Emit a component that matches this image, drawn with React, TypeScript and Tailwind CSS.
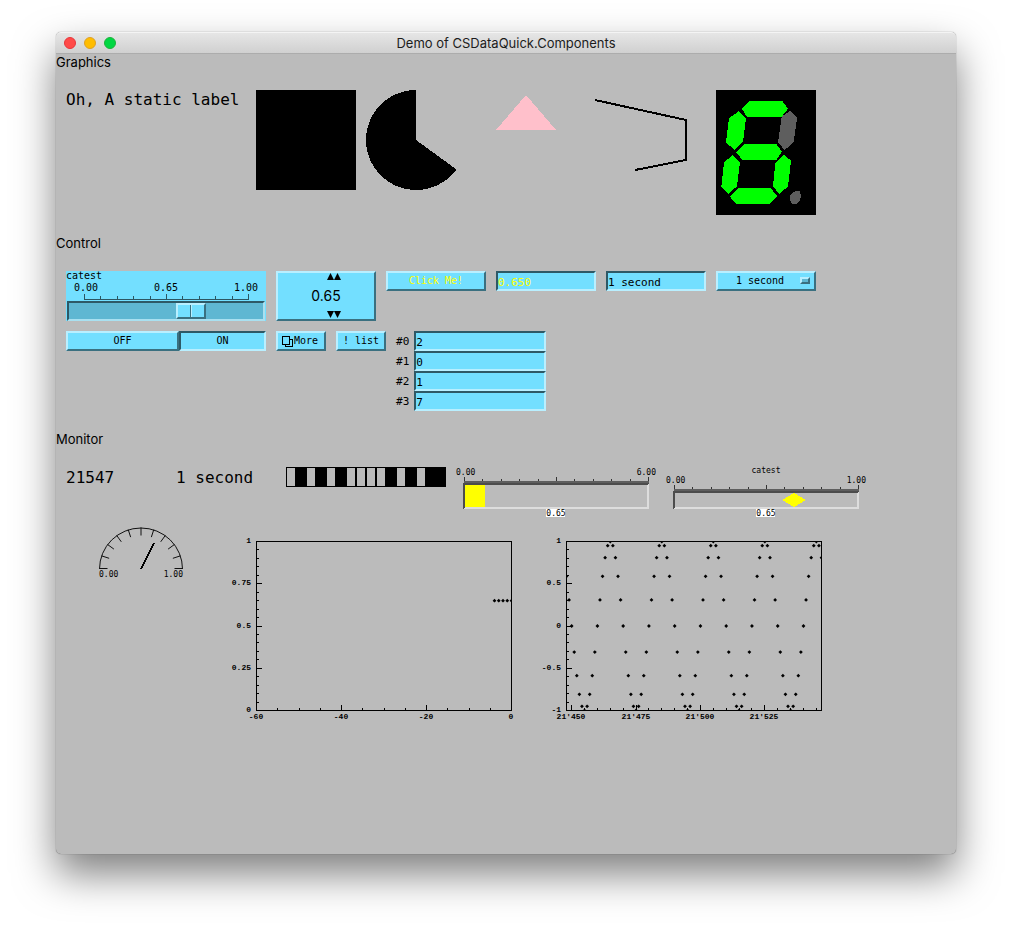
import { useState, type ReactNode } from 'react'

const MONO = 'font-["DejaVu_Sans_Mono",monospace]'
const RAISED =
  'border-2 border-t-[#b9efff] border-l-[#b9efff] border-b-[#3a7080] border-r-[#3a7080] bg-[#73dfff]'
const SUNKEN =
  'border-2 border-t-[#2e5966] border-l-[#2e5966] border-b-[#b9efff] border-r-[#b9efff] bg-[#73dfff]'

function Section({ title, children }: { title: string; children: ReactNode }) {
  return (
    <section>
      <h2 className="text-[13px] leading-4">{title}</h2>
      <div className="flex flex-col gap-2.5 px-2.5 py-5">{children}</div>
    </section>
  )
}

function TitleBar() {
  return (
    <header className="relative flex h-[22px] items-center justify-center rounded-t-[5px] border-t border-b border-t-[#f4f4f4] border-b-[#acacac] bg-linear-to-b from-[#e6e6e6] to-[#d0d0d0]">
      <div className="absolute left-2 flex gap-2">
        <button aria-label="Close" className="size-3 rounded-full border border-[#e8353a] bg-[#ff4a48]" />
        <button aria-label="Minimize" className="size-3 rounded-full border border-[#dfa023] bg-[#ffbd00]" />
        <button aria-label="Zoom" className="size-3 rounded-full border border-[#1db23a] bg-[#00d742]" />
      </div>
      <h1 className="text-[13px] leading-4 text-[#1c1c1c]">Demo of CSDataQuick.Components</h1>
    </header>
  )
}

const SEGMENTS: { points: string; on: boolean }[] = [
  { points: '148,63 247,63 264,86 245,110 140,110 126,87', on: true },
  { points: '117,93 138,115 129,185 103,210 78,187 87,115', on: true },
  { points: '270,93 291,114 281,187 254,210 234,187 245,110', on: false },
  { points: '134,192 229,192 246,215 229,240 127,240 109,217', on: true },
  { points: '99,225 120,247 111,319 84,342 64,320 72,247', on: true },
  { points: '252,225 273,242 264,320 238,341 219,320 226,249', on: true },
  { points: '117,324 212,324 231,348 207,372 108,372 89,349', on: true },
  { points: '280,335 299,333 303,345 300,363 288,372 275,371 269,358 270,346', on: false },
]

function SevenSegment() {
  return (
    <svg className="h-[125px] w-[100px] bg-black" viewBox="48 30 300 375" shapeRendering="crispEdges">
      {SEGMENTS.map((s) => (
        <polygon key={s.points} points={s.points} fill={s.on ? '#00ff00' : '#5e5e5e'} />
      ))}
    </svg>
  )
}

function Graphics() {
  return (
    <div className="flex flex-wrap items-start gap-2.5">
      <p className={`w-[180px] text-base leading-5 ${MONO}`}>Oh, A static label</p>
      <div className="size-[100px] bg-black" />
      <svg className="size-[100px]" viewBox="0 0 100 100" shapeRendering="crispEdges">
        <path d="M50 50 L50 0 A50 50 0 1 0 90.45 79.4 Z" />
      </svg>
      <svg className="size-[100px]" viewBox="0 0 100 100" shapeRendering="crispEdges">
        <polygon points="50,5 80,40 20,40" fill="#ffc0cb" />
      </svg>
      <svg className="h-[100px] w-[120px]" viewBox="0 0 120 100" shapeRendering="crispEdges">
        <polyline points="9,10 100,30 100,70 49,80" fill="none" stroke="black" strokeWidth="2" />
      </svg>
      <SevenSegment />
    </div>
  )
}

function Ticks({ x, y, width, color }: { x: number; y: number; width: number; color: string }) {
  return (
    <g fill={color} shapeRendering="crispEdges">
      {Array.from({ length: 11 }, (_, i) => {
        const h = i % 5 === 0 ? 6 : 4
        return <rect key={i} x={Math.round(x + (width * i) / 10)} y={y - h} width="1" height={h} />
      })}
    </g>
  )
}

function SliderControl() {
  const [value, setValue] = useState(0.65)
  return (
    <div className={`flex h-[50px] w-[200px] flex-col bg-[#73dfff] text-[10px] ${MONO}`}>
      <label htmlFor="catest" className="leading-[9px]">catest</label>
      <div className="flex justify-between px-2 pt-[2px] leading-[12px]">
        <span>0.00</span>
        <output htmlFor="catest">{value.toFixed(2)}</output>
        <span>1.00</span>
      </div>
      <svg className="h-[7px] w-full" viewBox="0 0 200 7">
        <Ticks x={18} y={6} width={164} color="#2c5663" />
        <rect x="18" y="5" width="165" height="1" fill="#2c5663" shapeRendering="crispEdges" />
      </svg>
      <input
        id="catest"
        type="range"
        min={0}
        max={1}
        step={0.01}
        value={value}
        onChange={(e) => setValue(Number(e.target.value))}
        className="mx-px h-5 appearance-none border-2 border-t-[#2e5966] border-l-[#2e5966] border-b-[#a9e0f0] border-r-[#a9e0f0] bg-[#5fb7d2] [&::-webkit-slider-thumb]:h-4 [&::-webkit-slider-thumb]:w-[30px] [&::-webkit-slider-thumb]:appearance-none [&::-webkit-slider-thumb]:border-2 [&::-webkit-slider-thumb]:border-t-[#b9efff] [&::-webkit-slider-thumb]:border-l-[#b9efff] [&::-webkit-slider-thumb]:border-b-[#3a7080] [&::-webkit-slider-thumb]:border-r-[#3a7080] [&::-webkit-slider-thumb]:bg-[linear-gradient(90deg,#73dfff_12px,#3a7080_12px,#3a7080_13px,#b9efff_13px,#b9efff_14px,#73dfff_14px)]"
      />
    </div>
  )
}

function ArrowButton({ down = false, label, onClick }: { down?: boolean; label: string; onClick: () => void }) {
  return (
    <button aria-label={label} onClick={onClick} className="size-[7px]">
      <svg className="size-[7px]" viewBox="0 0 7 7">
        <polygon points={down ? '0,0 7,0 3.5,7' : '0,7 7,7 3.5,0'} />
      </svg>
    </button>
  )
}

function WheelSwitch() {
  const [value, setValue] = useState(0.65)
  const step = (d: number) => () => setValue((v) => v + d)
  return (
    <div className={`flex h-[50px] w-[100px] flex-col items-center justify-between pb-px ${RAISED}`}>
      <div className="flex pl-4">
        <ArrowButton label="Increase tenths" onClick={step(0.1)} />
        <ArrowButton label="Increase hundredths" onClick={step(0.01)} />
      </div>
      <output className="text-sm leading-5">{value.toFixed(2)}</output>
      <div className="flex pl-4">
        <ArrowButton down label="Decrease tenths" onClick={step(-0.1)} />
        <ArrowButton down label="Decrease hundredths" onClick={step(-0.01)} />
      </div>
    </div>
  )
}

function TextEntry({ id, label, value, className }: { id: string; label?: string; value: string; className: string }) {
  return (
    <input
      id={id}
      aria-label={label}
      defaultValue={value}
      className={`h-5 pt-[2px] text-[11px] leading-[14px] ${SUNKEN} ${MONO} ${className}`}
    />
  )
}

function Control() {
  const [on, setOn] = useState(true)
  return (
    <>
      <div className="flex flex-wrap items-start gap-2.5 text-[10px]">
        <SliderControl />
        <WheelSwitch />
        <button className={`h-5 w-[100px] leading-4 text-[#ffff00] ${RAISED} ${MONO}`}>Click Me!</button>
        <TextEntry id="value-entry" label="Value" value="0.650" className="w-[100px] text-[#ffff00]" />
        <TextEntry id="rate-entry" label="Scan rate" value="1 second" className="w-[100px]" />
        <div className="relative w-[100px]">
          <select
            aria-label="Scan rate menu"
            defaultValue="1 second"
            className={`block h-5 w-full appearance-none pr-3 text-center leading-4 ${RAISED} ${MONO}`}
          >
            <option>1 second</option>
            <option>2 second</option>
            <option>5 second</option>
          </select>
          <span className="pointer-events-none absolute top-1.5 right-1.5 h-[7px] w-[10px] border-2 border-t-[#b9efff] border-l-[#b9efff] border-r-[#3a7080] border-b-[#3a7080] bg-[#5fb7d2]" />
        </div>
      </div>
      <div className={`flex flex-wrap items-start gap-2.5 text-[10px] leading-4 ${MONO}`}>
        <div className="flex w-[200px]">
          <button
            aria-pressed={!on}
            onClick={() => setOn(false)}
            className={`h-5 w-[113px] ${on ? RAISED : SUNKEN}`}
          >
            OFF
          </button>
          <button aria-pressed={on} onClick={() => setOn(true)} className={`h-5 grow ${on ? SUNKEN : RAISED}`}>
            ON
          </button>
        </div>
        <button className={`flex h-5 w-[50px] items-center pl-1 ${RAISED}`}>
          <svg className="size-3" viewBox="0 0 12 12" fill="none" stroke="black" shapeRendering="crispEdges">
            <path d="M0.5 1.5 h7 v8 h-7 z M8 4.5 h2.5 v7 h-7 v-2" />
          </svg>
          More
        </button>
        <button className={`h-5 w-[50px] ${RAISED}`}>! list</button>
        <div className="flex flex-col">
          {['2', '0', '1', '7'].map((v, i) => (
            <div key={i} className="flex items-center gap-[5px]">
              <label htmlFor={`entry-${i}`} className="pt-[2px] text-[11px]">#{i}</label>
              <TextEntry id={`entry-${i}`} value={v} className="w-[132px]" />
            </div>
          ))}
        </div>
      </div>
    </>
  )
}

function ByteView({ value }: { value: number }) {
  return (
    <svg className="h-5 w-[160px] bg-black" viewBox="0 0 160 20" shapeRendering="crispEdges">
      {Array.from({ length: 16 }, (_, i) =>
        (value >> (15 - i)) & 1 ? null : <rect key={i} x={i * 10 + 1} y="1" width="8" height="18" fill="#bbbbbb" />,
      )}
    </svg>
  )
}

function Trough({ top }: { top: number }) {
  return (
    <g shapeRendering="crispEdges">
      <rect x="8" y={top} width="185" height="2" fill="#5e5e5e" />
      <polygon points={`193,${top + 2} 193,42 7,42 9,40 191,40 191,${top + 4}`} fill="#dddddd" />
      <polygon points={`7,42 7,${top + 2} 193,${top + 2} 191,${top + 4} 9,${top + 4} 9,40`} fill="#4c4c4c" />
    </g>
  )
}

function ReadBack({ children }: { children: string }) {
  return (
    <>
      <rect x="90" y="42" width="19" height="8" fill="white" />
      <text x="100" y="49" textAnchor="middle">{children}</text>
    </>
  )
}

function BarMeter() {
  return (
    <svg className={`h-[50px] w-[200px] text-[8px] ${MONO}`} viewBox="0 0 200 50">
      <text x="0" y="8">0.00</text>
      <text x="200" y="8" textAnchor="end">6.00</text>
      <Ticks x={8} y={16} width={184} color="#333333" />
      <Trough top={14} />
      <rect x="9" y="18" width="20" height="22" fill="#ffff00" />
      <ReadBack>0.65</ReadBack>
    </svg>
  )
}

function Indicator() {
  return (
    <svg className={`h-[50px] w-[200px] overflow-visible text-[8px] ${MONO}`} viewBox="0 0 200 50">
      <text x="100" y="6" textAnchor="middle">catest</text>
      <text x="0" y="16">0.00</text>
      <text x="200" y="16" textAnchor="end">1.00</text>
      <Ticks x={8} y={24} width={184} color="#333333" />
      <Trough top={22} />
      <polygon points="116,33 128,26 140,33 128,40" fill="#ffff00" shapeRendering="crispEdges" />
      <ReadBack>0.65</ReadBack>
    </svg>
  )
}

function Gauge() {
  return (
    <svg className={`h-[52px] w-[150px] text-[8px] ${MONO}`} viewBox="0 0 150 52">
      <g fill="none" stroke="#111111">
        <path d="M33.5 42 A41.5 41 0 0 1 116.5 42" />
        {Array.from({ length: 11 }, (_, i) => {
          const a = Math.PI * (1 - i / 10)
          const c = Math.cos(a)
          const s = Math.sin(a)
          return <path key={i} d={`M${75 + 41.5 * c} ${41.5 - 41 * s} L${75 + 33.5 * c} ${41.5 - 33 * s}`} />
        })}
      </g>
      <path d="M75 42 L88 16" stroke="black" strokeWidth="2" shapeRendering="crispEdges" />
      <text x="33" y="50">0.00</text>
      <text x="117" y="50" textAnchor="end">1.00</text>
    </svg>
  )
}

type Tick = { at: number; label?: string }
type Point = [number, number]

const LEFT = 30
const TOP = 14
const W = 255
const H = 169

function Plot({ id, xTicks, yTicks, points }: { id: string; xTicks: Tick[]; yTicks: Tick[]; points: Point[] }) {
  const px = (f: number) => Math.round(LEFT + W * f)
  const py = (f: number) => Math.round(TOP + H * (1 - f))
  return (
    <svg
      className='h-[200px] w-[300px] font-["Liberation_Mono",monospace] text-[8px] font-bold'
      viewBox="0 0 300 200"
    >
      <clipPath id={id}>
        <rect x={LEFT} y={TOP} width={W + 1} height={H + 1} />
      </clipPath>
      <g shapeRendering="crispEdges">
        <rect x={LEFT + 0.5} y={TOP + 0.5} width={W} height={H} fill="none" stroke="black" />
        {xTicks.map((t) => {
          const h = t.label ? 5 : 2
          return <rect key={t.at} x={px(t.at)} y={TOP + H - h} width="1" height={h} />
        })}
        {yTicks.map((t) => (
          <rect key={t.at} x={LEFT + 1} y={py(t.at)} width={t.label ? 5 : 2} height="1" />
        ))}
      </g>
      {xTicks.map((t) => (
        <text key={t.at} x={px(t.at)} y="192" textAnchor="middle">{t.label}</text>
      ))}
      {yTicks.map((t) => (
        <text key={t.at} x="25" y={py(t.at) + 2} textAnchor="end">{t.label}</text>
      ))}
      <g clipPath={`url(#${id})`}>
        {points.map(([x, y]) => (
          <path
            key={x}
            d="M-1.9 0 L0 -1.9 L1.9 0 L0 1.9 Z"
            transform={`translate(${LEFT + 0.5 + W * x} ${TOP + 0.5 + H * (1 - y)})`}
          />
        ))}
      </g>
    </svg>
  )
}

function divisions(labels: string[]): Tick[] {
  return Array.from({ length: 21 }, (_, i) => ({ at: i / 20, label: i % 5 === 0 ? labels[i / 5] : undefined }))
}

const STRIP_X: Tick[] = Array.from({ length: 13 }, (_, i) => ({
  at: i / 12,
  label: i % 4 === 0 ? String(-60 + i * 5) : undefined,
}))
const STRIP_POINTS: Point[] = [-4, -3, -2, -1, 0].map((t) => [(t + 60) / 60, 0.65])

const START = 21448
const SPAN = 99
const WAVE_X: Tick[] = Array.from({ length: 20 }, (_, i) => {
  const n = 21450 + i * 5
  return { at: (n - START) / SPAN, label: n % 25 === 0 ? `21'${n - 21000}` : undefined }
})
const WAVE_POINTS: Point[] = Array.from({ length: 100 }, (_, i) => [
  i / SPAN,
  (Math.sin((Math.PI * (START + i)) / 10) + 1) / 2,
])

function Monitor() {
  return (
    <>
      <div className={`flex flex-wrap items-start gap-2.5 ${MONO}`}>
        <p className="w-[100px] text-base leading-[22px]">21547</p>
        <p className="w-[100px] text-base leading-[22px]">1 second</p>
        <ByteView value={21547} />
        <BarMeter />
        <Indicator />
      </div>
      <div className="flex flex-wrap items-start gap-2.5">
        <Gauge />
        <Plot id="strip-area" xTicks={STRIP_X} yTicks={divisions(['0', '0.25', '0.5', '0.75', '1'])} points={STRIP_POINTS} />
        <Plot id="wave-area" xTicks={WAVE_X} yTicks={divisions(['-1', '-0.5', '0', '0.5', '1'])} points={WAVE_POINTS} />
      </div>
    </>
  )
}

export default function App() {
  return (
    <div className="flex min-h-screen flex-col bg-white px-14 pt-8 pb-20 font-[Inter,sans-serif] text-black">
      <div className="flex grow flex-col rounded-[5px] bg-[#bbbbbb] shadow-[0_0_1px_rgba(0,0,0,0.6),0_20px_40px_rgba(0,0,0,0.5)]">
        <TitleBar />
        <main className="grow">
          <Section title="Graphics">
            <Graphics />
          </Section>
          <Section title="Control">
            <Control />
          </Section>
          <Section title="Monitor">
            <Monitor />
          </Section>
        </main>
      </div>
    </div>
  )
}
